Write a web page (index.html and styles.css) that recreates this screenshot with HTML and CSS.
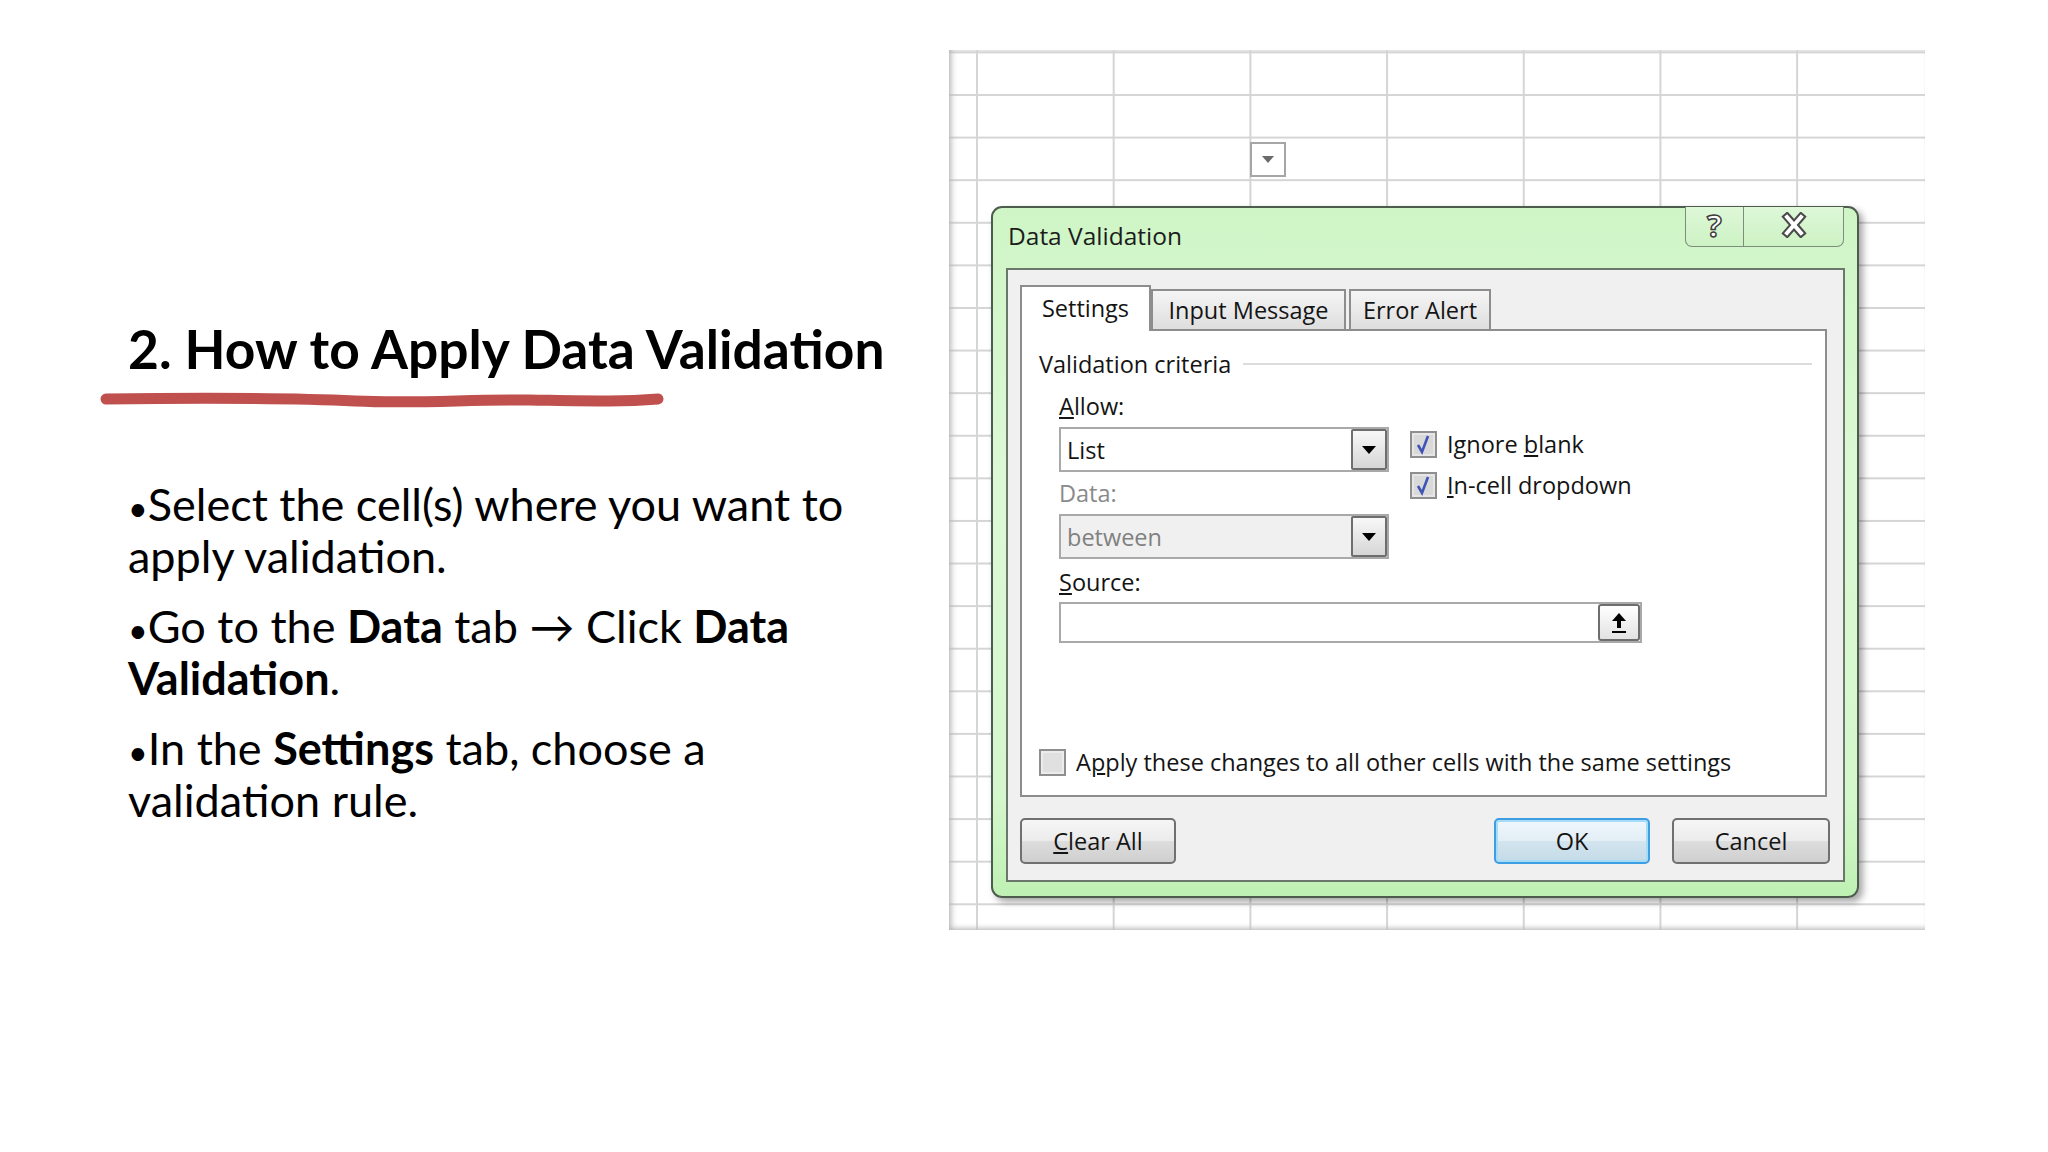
FILE: index.html
```html
<!DOCTYPE html>
<html lang="en">

<head>
    <meta charset="UTF-8">
    <title>How to Apply Data Validation</title>
    <link rel="stylesheet" href="styles.css">
</head>

<body>
    <div class="slide">
        <div class="lesson">
            <h1>2. How to Apply Data Validation</h1>
            <svg class="brush" width="565" height="20" viewBox="0 0 565 20">
                <path d="M6 9 C 90 8, 190 8, 255 11 S 370 9, 430 10 S 520 12, 558 9" fill="none" stroke="#c0504d" stroke-width="11" stroke-linecap="round"/>
            </svg>
            <ul class="steps">
                <li><span class="dot">•</span>Select the cell(s) where you want to<br>apply validation.</li>
                <li><span class="dot">•</span>Go to the <b>Data</b> tab → Click <b>Data</b><br><b>Validation</b>.</li>
                <li><span class="dot">•</span>In the <b>Settings</b> tab, choose a<br>validation rule.</li>
            </ul>
        </div>

        <div class="shot">
            <!-- little in-cell dropdown from the sheet behind the dialog -->
            <div class="cell-drop">
                <svg width="12" height="7" viewBox="0 0 12 7"><polygon points="0,0 12,0 6,7" fill="#6b6b6b"/></svg>
            </div>

            <div class="dlg">
                <div class="dlg-title">
                    <span>Data Validation</span>
                    <div class="caption-btns">
                        <span class="cap-help">?</span>
                        <span class="cap-close">
                            <svg width="30" height="26" viewBox="0 0 30 26">
                                <path d="M8 5 L22 21 M22 5 L8 21" stroke="#4a4a4a" stroke-width="8" stroke-linecap="square"/>
                                <path d="M8 5 L22 21 M22 5 L8 21" stroke="#fff" stroke-width="4" stroke-linecap="square"/>
                            </svg>
                        </span>
                    </div>
                </div>

                <div class="dlg-body">
                    <div class="tabs">
                        <div class="tab active">Settings</div>
                        <div class="tab tab-input">Input Message</div>
                        <div class="tab tab-error">Error Alert</div>
                    </div>

                    <div class="tab-panel">
                        <div class="criteria">Validation criteria</div>

                        <div class="crit-main">
                            <div class="crit-left">
                                <div class="lbl"><u>A</u>llow:</div>
                                <div class="combo">
                                    <span>List</span>
                                    <span class="combo-btn">
                                        <svg width="14" height="8" viewBox="0 0 14 8"><polygon points="0,0 14,0 7,8" fill="#000"/></svg>
                                    </span>
                                </div>
                                <div class="lbl lbl-off">Data:</div>
                                <div class="combo combo-off">
                                    <span>between</span>
                                    <span class="combo-btn">
                                        <svg width="14" height="8" viewBox="0 0 14 8"><polygon points="0,0 14,0 7,8" fill="#000"/></svg>
                                    </span>
                                </div>
                            </div>
                            <div class="crit-right">
                                <div class="check-row">
                                    <svg class="chk" width="27" height="27" viewBox="0 0 27 27">
                                        <rect x="1" y="1" width="25" height="25" fill="#e6e6e6" stroke="#8f8f8f" stroke-width="2"/>
                                        <rect x="4" y="4" width="19" height="19" fill="#d9d9d9"/>
                                        <path d="M8 14 L12 21 L18 5" fill="none" stroke="#3f55b5" stroke-width="2.6"/>
                                    </svg>
                                    <span>Ignore <u>b</u>lank</span>
                                </div>
                                <div class="check-row">
                                    <svg class="chk" width="27" height="27" viewBox="0 0 27 27">
                                        <rect x="1" y="1" width="25" height="25" fill="#e6e6e6" stroke="#8f8f8f" stroke-width="2"/>
                                        <rect x="4" y="4" width="19" height="19" fill="#d9d9d9"/>
                                        <path d="M8 14 L12 21 L18 5" fill="none" stroke="#3f55b5" stroke-width="2.6"/>
                                    </svg>
                                    <span><u>I</u>n-cell dropdown</span>
                                </div>
                            </div>
                        </div>

                        <div class="lbl lbl-source"><u>S</u>ource:</div>
                        <div class="source">
                            <span class="source-btn">
                                <svg width="18" height="22" viewBox="0 0 18 22">
                                    <polygon points="9,1 16,9 11,9 11,16 7,16 7,9 2,9" fill="#000"/>
                                    <rect x="2" y="19" width="14" height="2" fill="#000"/>
                                </svg>
                            </span>
                        </div>

                        <div class="check-row apply-row">
                            <svg class="chk" width="27" height="27" viewBox="0 0 27 27">
                                <rect x="1" y="1" width="25" height="25" fill="#ececec" stroke="#8f8f8f" stroke-width="2"/>
                                <rect x="4" y="4" width="19" height="19" fill="#e0e0e0"/>
                            </svg>
                            <span>A<u>p</u>ply these changes to all other cells with the same settings</span>
                        </div>
                    </div>

                    <div class="dlg-buttons">
                        <div class="btn"><u>C</u>lear All</div>
                        <div class="btn btn-ok">OK</div>
                        <div class="btn btn-cancel">Cancel</div>
                    </div>
                </div>
            </div>
        </div>
    </div>
</body>

</html>
```

FILE: styles.css
```css
* {
    box-sizing: border-box;
}

body {
    margin: 0;
    background: #fff;
    font-family: Lato, "Liberation Sans", sans-serif;
    color: #000;
}

.slide {
    width: 2048px;
    height: 1152px;
    display: flex;
    align-items: flex-start;
}

/* left side: title + bullets */
.lesson {
    width: 949px;
    flex: none;
    padding: 321px 0 0 128px;
}

.lesson h1 {
    margin: 0;
    font-size: 53.3px;
    font-weight: 700;
    line-height: 54px;
    white-space: nowrap;
}

.brush {
    display: block;
    margin: 15px 0 0 -28px;
}

.steps {
    margin: 69px 0 0;
    padding: 0;
    list-style: none;
    font-size: 45px;
    line-height: 51.5px;
}

.steps li {
    margin-bottom: 19px;
    white-space: nowrap;
}

.steps .dot {
    font-size: 34px;
    line-height: 0;
}

/* right side: excel screenshot */
.shot {
    width: 976px;
    height: 880px;
    margin-top: 50px;
    position: relative;
    flex: none;
    background-color: #fff;
    background-image:
        linear-gradient(to right, #d5d5d5 2px, transparent 2px),
        linear-gradient(to bottom, #d5d5d5 2px, transparent 2px);
    background-size: 136.7px 100%, 100% 42.6px;
    background-position: 27px 0, 0 44px;
    box-shadow: inset 6px 0 6px -4px #b4b4b4, inset 0 -5px 5px -3px #c2c2c2, inset 0 3px 3px -2px #dadada;
}

.cell-drop {
    position: absolute;
    left: 301px;
    top: 92px;
    width: 36px;
    height: 35px;
    border: 2px solid #a6a6a6;
    background: #fff;
    display: flex;
    align-items: center;
    justify-content: center;
}

.dlg {
    position: absolute;
    left: 42px;
    top: 156px;
    width: 868px;
    height: 692px;
    display: flex;
    flex-direction: column;
    padding: 0 12px 14px 13px;
    border: 2px solid #4d5c4d;
    border-radius: 11px;
    background: linear-gradient(to bottom, #cff5c6 0%, #dcf9d5 40%, #d5f7cd 85%, #bff1b3 100%);
    box-shadow: 4px 4px 7px rgba(0, 0, 0, 0.35);
    font-family: "Open Sans", "Noto Sans", sans-serif;
    font-size: 23.5px;
    color: #141414;
}

.dlg-title {
    height: 60px;
    flex: none;
    position: relative;
    padding-left: 2px;
    font-size: 24.5px;
    line-height: 56px;
    color: #1c1c1c;
}

.caption-btns {
    position: absolute;
    top: -1px;
    right: 1px;
    width: 159px;
    height: 40px;
    display: flex;
    border: 1px solid #7d8d7d;
    border-top: 0;
    border-radius: 0 0 7px 7px;
    background: linear-gradient(to bottom, #def8d8, #cdf2c4);
}

.cap-help {
    width: 58px;
    border-right: 1px solid #7d8d7d;
    text-align: center;
    font-weight: 700;
    font-size: 31px;
    line-height: 36px;
    color: #fff;
    -webkit-text-stroke: 1.5px #3c3c3c;
}

.cap-close {
    flex: 1;
    display: flex;
    align-items: center;
    justify-content: center;
    padding-bottom: 4px;
}

.dlg-body {
    flex: 1;
    display: flex;
    flex-direction: column;
    padding: 15px 16px 0 12px;
    border: 2px solid #6a776a;
    background: #f0f0f0;
}

/* tabs */
.tabs {
    height: 44px;
    display: flex;
    align-items: flex-end;
}

.tab {
    height: 40px;
    border: 2px solid #8d8d8d;
    border-bottom: 0;
    background: linear-gradient(to bottom, #f5f5f5, #dedede);
    text-align: center;
    line-height: 38px;
}

.tab.active {
    width: 131px;
    height: 46px;
    margin-bottom: -2px;
    position: relative;
    z-index: 1;
    background: #fff;
    line-height: 42px;
}

.tab-input {
    width: 195px;
}

.tab-error {
    width: 142px;
    margin-left: 3px;
}

.tab-panel {
    height: 468px;
    display: flex;
    flex-direction: column;
    padding: 18px 13px 18px 17px;
    border: 2px solid #8d8d8d;
    background: #fff;
}

.criteria {
    display: flex;
    align-items: center;
    line-height: 30px;
}

.criteria::after {
    content: "";
    flex: 1;
    margin-left: 12px;
    border-top: 2px solid #dcdcdc;
}

.crit-main {
    display: flex;
    gap: 21px;
    padding-left: 20px;
}

.crit-left {
    width: 330px;
    display: flex;
    flex-direction: column;
}

.lbl {
    line-height: 30px;
    margin-top: 12px;
}

.lbl-off {
    color: #8a8a8a;
    margin-top: 6px;
}

.lbl-source {
    margin: 8px 0 0 20px;
}

.combo {
    height: 45px;
    margin-top: 6px;
    display: flex;
    align-items: center;
    justify-content: space-between;
    padding: 0 0 0 6px;
    border: 2px solid #a9a9a9;
    background: #fff;
    line-height: 30px;
}

.combo-off {
    background: #f0f0f0;
    color: #808080;
}

.combo-btn {
    width: 36px;
    height: 41px;
    display: flex;
    align-items: center;
    justify-content: center;
    border: 2px solid #6e6e6e;
    border-radius: 2px;
    background: linear-gradient(to bottom, #f8f8f8, #d6d6d6);
}

.crit-right {
    padding-top: 50px;
    display: flex;
    flex-direction: column;
    gap: 11px;
}

.check-row {
    display: flex;
    align-items: center;
    gap: 10px;
    line-height: 30px;
    white-space: nowrap;
}

.chk {
    flex: none;
}

.source {
    width: 583px;
    height: 41px;
    margin: 5px 0 0 20px;
    display: flex;
    justify-content: flex-end;
    padding: 0;
    border: 2px solid #a9a9a9;
    background: #fff;
}

.source-btn {
    width: 42px;
    height: 37px;
    display: flex;
    align-items: center;
    justify-content: center;
    border: 2px solid #6e6e6e;
    border-radius: 3px;
    background: linear-gradient(to bottom, #ffffff, #e2e2e2);
}

.apply-row {
    margin-top: auto;
}

/* bottom buttons */
.dlg-buttons {
    display: flex;
    margin-top: 21px;
}

.btn {
    width: 156px;
    height: 46px;
    border: 2px solid #707070;
    border-radius: 5px;
    background: linear-gradient(to bottom, #f6f6f6 0%, #ebebeb 50%, #dddddd 51%, #cfcfcf 100%);
    text-align: center;
    line-height: 42px;
}

.btn-ok {
    margin-left: auto;
    border-color: #3d9ee3;
    box-shadow: inset 0 0 0 2px #a6dcf7;
    background: linear-gradient(to bottom, #eef7fc 0%, #e3eef5 50%, #d2e4ee 51%, #c4dbe8 100%);
}

.btn-cancel {
    width: 158px;
    margin-left: 22px;
    margin-right: -3px;
}
```
